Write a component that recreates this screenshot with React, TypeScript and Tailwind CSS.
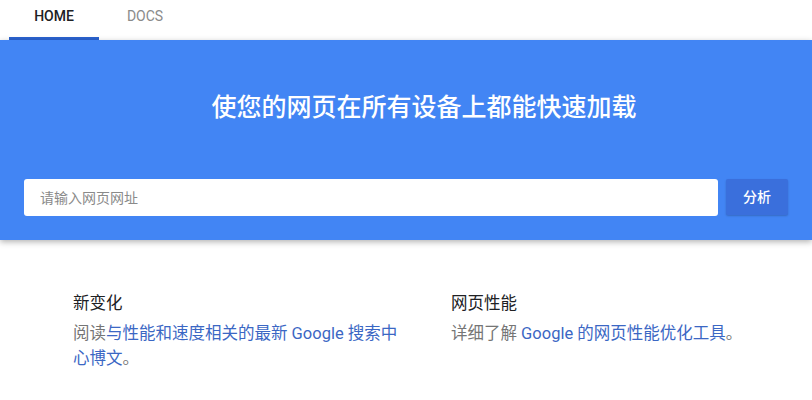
// Landing page: tab bar, blue hero with URL input, two info columns.

const FONT = {
  fontFamily: '"Roboto", "Noto Sans CJK SC", sans-serif',
};

function TabBar() {
  return (
    <div className="flex h-10 items-stretch bg-white pl-[9px]">
      <div className="flex w-[90px] items-center justify-center border-b-[3px] border-[#2a62cf] pb-[5px] text-[14px] font-medium text-[#202124]">
        HOME
      </div>
      <div className="flex w-[92px] items-center justify-center pb-[8px] text-[14px] text-[#8a8a8a]">
        DOCS
      </div>
    </div>
  );
}

function Hero() {
  return (
    <div className="relative z-10 bg-[#4285f4] px-6 pb-6 pt-[52px] shadow-[0_2px_6px_rgba(0,0,0,0.3)]">
      <h1 className="pl-[36px] text-center text-[25px] font-medium leading-[32px] text-white">
        使您的网页在所有设备上都能快速加载
      </h1>
      <div className="mt-[55px] flex gap-2">
        <input
          className="h-[37px] flex-1 rounded-[3px] bg-white px-4 text-[14px] text-[#202124] outline-none placeholder:text-[#8a8a8a]"
          placeholder="请输入网页网址"
          style={FONT}
        />
        <button
          className="h-[36px] w-[62px] rounded-[2px] bg-[#3a6fdc] text-[14px] font-medium text-white shadow-[0_1px_2px_rgba(0,0,0,0.2)]"
          style={FONT}
        >
          分析
        </button>
      </div>
    </div>
  );
}

function InfoColumn({
  title,
  children,
}: {
  title: string;
  children: React.ReactNode;
}) {
  return (
    <div className="w-[378px] shrink-0">
      <h2 className="text-[16.5px] font-normal leading-[24px] text-[#202124]">{title}</h2>
      <p className="mt-[5px] w-[338px] text-[16.5px] leading-[25px] text-[#757575]">{children}</p>
    </div>
  );
}

export default function App() {
  return (
    <div className="h-[400px] w-[812px] overflow-hidden bg-white" style={FONT}>
      <TabBar />
      <Hero />
      <div className="flex pl-[73px] pt-[52px]">
        <InfoColumn title="新变化">
          阅读<span className="text-[#3b67c4]">与性能和速度相关的最新 Google 搜索中心博文</span>。
        </InfoColumn>
        <InfoColumn title="网页性能">
          详细了解 <span className="text-[#3b67c4]">Google 的网页性能优化工具</span>。
        </InfoColumn>
      </div>
    </div>
  );
}
